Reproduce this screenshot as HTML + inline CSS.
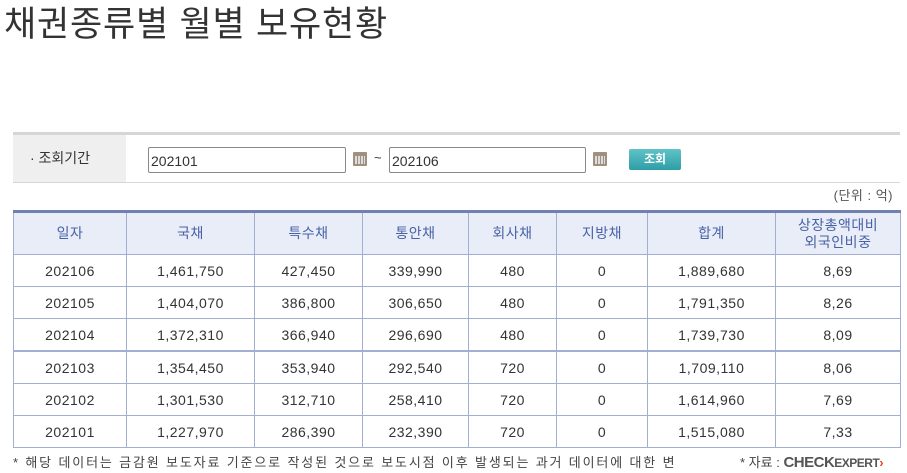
<!DOCTYPE html>
<html><head><meta charset="utf-8"><style>
body{margin:0;width:907px;height:473px;background:#fff;font-family:"Liberation Sans","Noto Sans CJK KR",sans-serif;color:#333;position:relative;overflow:hidden}
.t{position:absolute;left:4px;top:-4px;font-size:35px;color:#333;letter-spacing:0.8px}
.sb{position:absolute;left:13px;top:132px;width:887px;height:47px;border-top:3px solid #d6d6d6;border-bottom:1px solid #d6d6d6}
.lb{position:absolute;left:0;top:0;width:113px;height:47px;background:#efefef;font-size:14px;line-height:47px}
.lb span{margin-left:17px}
.in{position:absolute;top:12px;height:26px;border:1px solid #888;border-radius:2px;font-size:14px;line-height:27px;padding-left:2px;box-sizing:border-box}
.cal{position:absolute;top:17px;width:14px;height:14px;background:#a09080;border-radius:1px}
.cal:after{content:"";position:absolute;left:2px;top:4px;width:10px;height:8px;background:repeating-linear-gradient(90deg,#ddd 0 2px,#a09080 2px 3px)}
.btn{position:absolute;left:616px;top:14px;width:52px;height:21px;background:linear-gradient(#5fc3c8,#2e9ea6);border-radius:2px;color:#fff;font-size:12px;text-align:center;line-height:21px;font-weight:bold}
.unit{position:absolute;right:14px;top:185px;font-size:13px;color:#555;letter-spacing:0.5px}
table{position:absolute;left:13px;top:210px;width:888px;border-collapse:collapse;border-top:3px solid #7180b3;font-size:14px;color:#333;letter-spacing:0.5px}
td,th{border:1px solid #a3afd2;text-align:center;padding:0;height:31px}
th{background:#e9edf7;color:#4862a8;font-weight:normal;height:41px;line-height:17px}
tr.th td{border-top:2px solid #a3afd2}
.ft{position:absolute;left:13px;top:452px;font-size:13px;color:#444;letter-spacing:1.85px}
.src{position:absolute;left:740px;top:452px;font-size:13px;color:#444}
.src b{font-family:"Liberation Sans",sans-serif;color:#555;font-size:15px;letter-spacing:-0.5px}
</style></head><body>
<div class="t">채권종류별 월별 보유현황</div>
<div class="sb">
<div class="lb"><span>· 조회기간</span></div>
<div class="in" style="left:135px;width:198px">202101</div>
<div class="cal" style="left:340px"></div>
<div style="position:absolute;left:361px;top:15px;font-size:13px">~</div>
<div class="in" style="left:376px;width:197px">202106</div>
<div class="cal" style="left:580px"></div>
<div class="btn">조회</div>
</div>
<div class="unit">(단위 : 억)</div>
<table>
<colgroup><col style="width:113px"><col style="width:128px"><col style="width:108px"><col style="width:106px"><col style="width:88px"><col style="width:91px"><col style="width:128px"><col></colgroup>
<tr><th>일자</th><th>국채</th><th>특수채</th><th>통안채</th><th>회사채</th><th>지방채</th><th>합계</th><th>상장총액대비<br>외국인비중</th></tr>
<tr><td>202106</td><td>1,461,750</td><td>427,450</td><td>339,990</td><td>480</td><td>0</td><td>1,889,680</td><td>8,69</td></tr>
<tr><td>202105</td><td>1,404,070</td><td>386,800</td><td>306,650</td><td>480</td><td>0</td><td>1,791,350</td><td>8,26</td></tr>
<tr><td>202104</td><td>1,372,310</td><td>366,940</td><td>296,690</td><td>480</td><td>0</td><td>1,739,730</td><td>8,09</td></tr>
<tr class="th"><td>202103</td><td>1,354,450</td><td>353,940</td><td>292,540</td><td>720</td><td>0</td><td>1,709,110</td><td>8,06</td></tr>
<tr><td>202102</td><td>1,301,530</td><td>312,710</td><td>258,410</td><td>720</td><td>0</td><td>1,614,960</td><td>7,69</td></tr>
<tr><td>202101</td><td>1,227,970</td><td>286,390</td><td>232,390</td><td>720</td><td>0</td><td>1,515,080</td><td>7,33</td></tr>
</table>
<div class="ft">* 해당 데이터는 금감원 보도자료 기준으로 작성된 것으로 보도시점 이후 발생되는 과거 데이터에 대한 변</div>
<div class="src">* 자료 : <b>CHECK<span style="font-size:12px">EXPERT</span></b><span style="color:#e8491d;font-weight:bold">›</span></div>
</body></html>
